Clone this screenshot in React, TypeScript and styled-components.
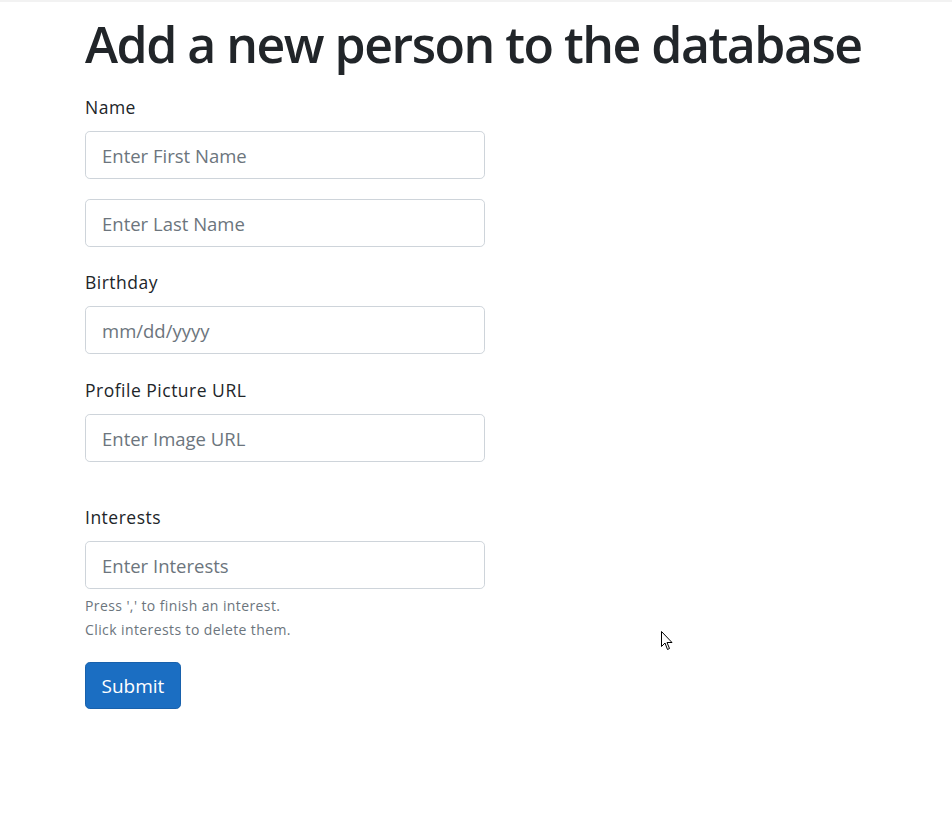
import styled, { createGlobalStyle } from "styled-components";

const GlobalStyle = createGlobalStyle`
  body {
    margin: 0;
    font-family: "Open Sans", "Noto Sans", "Liberation Sans", sans-serif;
    color: #212529;
    background: #fff;
  }
`;

const TopRule = styled.div`
  height: 2px;
  background: #f2f2f2;
`;

const Main = styled.main`
  position: relative;
  padding: 12px 0 100px 85px;
`;

const Title = styled.h1`
  margin: 0 0 21px;
  font-size: 50px;
  font-weight: 600;
  line-height: 60px;
  letter-spacing: -1.5px;
`;

const Form = styled.form`
  width: 400px;
`;

const Group = styled.div<{ $space?: number }>`
  margin-bottom: ${({ $space }) => $space ?? 24}px;
`;

const Label = styled.label`
  display: block;
  font-size: 17.5px;
  line-height: 24px;
  letter-spacing: 0.5px;
  margin-bottom: 12px;
`;

const Input = styled.input`
  display: block;
  box-sizing: border-box;
  width: 100%;
  height: 48px;
  padding: 8px 16px;
  font-family: inherit;
  font-size: 18.5px;
  color: #495057;
  border: 1px solid #ced4da;
  border-radius: 4.8px;
  background: #fff;
  &::placeholder {
    color: #6c757d;
  }
`;

const Spacer = styled.div<{ $h: number }>`
  height: ${({ $h }) => $h}px;
`;

const Help = styled.small`
  display: block;
  margin-top: 5px;
  font-size: 14px;
  line-height: 24px;
  letter-spacing: 0.4px;
  color: #6c757d;
`;

const SubmitButton = styled.button`
  margin-top: 20px;
  height: 47px;
  padding: 0 15.5px;
  font-family: inherit;
  font-size: 19px;
  color: #fff;
  background: #1b6ec2;
  border: 1px solid #1861ac;
  border-radius: 4.8px;
  cursor: pointer;
`;

const Pointer = styled.svg`
  position: absolute;
  left: 661px;
  top: 629px;
`;

export default function App() {
  return (
    <>
      <GlobalStyle />
      <TopRule />
      <Main>
        <Title>Add a new person to the database</Title>
        <Form onSubmit={(e) => e.preventDefault()}>
          <Label>Name</Label>
          <Group $space={20}>
            <Input placeholder="Enter First Name" />
          </Group>
          <Group $space={23}>
            <Input placeholder="Enter Last Name" />
          </Group>
          <Group>
            <Label>Birthday</Label>
            <Input placeholder="mm/dd/yyyy" />
          </Group>
          <Group>
            <Label>Profile Picture URL</Label>
            <Input placeholder="Enter Image URL" />
          </Group>
          <Spacer $h={19} />
          <Group $space={0}>
            <Label>Interests</Label>
            <Input placeholder="Enter Interests" />
            <Help>
              Press ',' to finish an interest.
              <br />
              Click interests to delete them.
            </Help>
          </Group>
          <SubmitButton type="submit">Submit</SubmitButton>
        </Form>
        <Pointer width="12" height="20" viewBox="0 0 12 20">
          <path
            d="M0.5 0.5 L0.5 15.5 L4 12 L6.5 18.5 L8.5 17.5 L6 11.5 L11 11.5 Z"
            fill="#fff"
            stroke="#000"
            strokeWidth="1"
            strokeLinejoin="round"
          />
        </Pointer>
      </Main>
    </>
  );
}
